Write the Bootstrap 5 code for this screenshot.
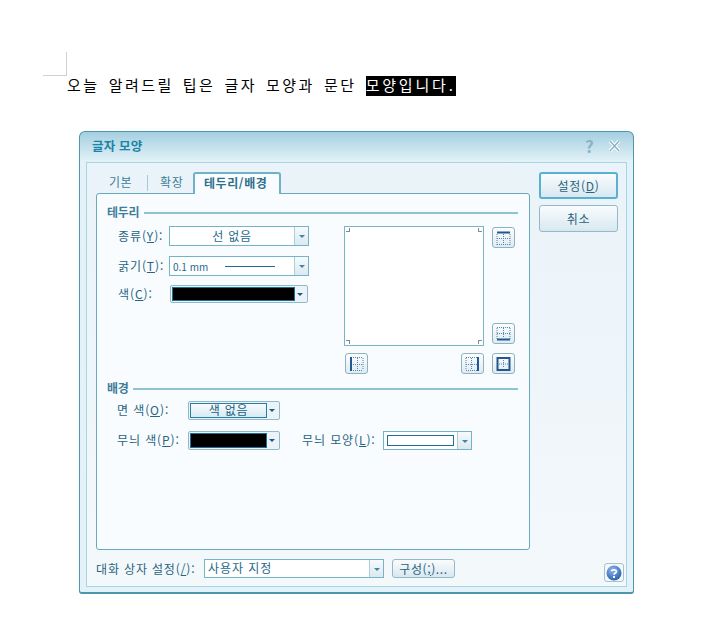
<!DOCTYPE html>
<html lang="ko"><head><meta charset="utf-8"><title>글자 모양</title>
<link rel="stylesheet" href="https://cdn.jsdelivr.net/npm/bootstrap@5.3.0/dist/css/bootstrap.min.css">
<style>
html,body{background:#fff;margin:0;font-family:"Noto Sans CJK KR","Noto Sans",sans-serif;font-size:12px;line-height:1.2;color:#2a6480}
.crop{width:24px;height:24px;margin:52px 0 0 43px;border-right:1px solid #d0d0d0;border-bottom:1px solid #d0d0d0}
.docline{margin:0 0 0 67px;height:20px;line-height:18px;font-size:15px;color:#000;letter-spacing:2.45px;white-space:nowrap;word-spacing:2.5px}
.docline span{background:#000;color:#fff;display:inline-block;height:20px;letter-spacing:2.8px}
.dlg{width:555px;height:463px;margin:35px 0 0 79px;border:1px solid #4c96ae;border-radius:6px 6px 3px 3px;background:linear-gradient(#a4cfe0 0,#e3f2f8 30px);background-color:#e3f2f8;border-bottom-width:2px}
.ttl{height:30px;padding:0 12px 3px 12px;color:#1b83a6;font-weight:700;font-size:12.5px;letter-spacing:.2px}
.hbtn{color:#8ab2c4;font-size:17px;font-weight:700;line-height:1}
.hgap{gap:14px}
.inner{height:425px;margin:0 6px;border:1px solid #a8d5df;background:linear-gradient(#eaf3f9,#f3f8fb);padding:9px 2px 0 9px}
.lcol{width:434px}
.dtabs{height:21px;border:0;padding-left:5px;flex-wrap:nowrap}
.dtabs .nav-link{border:0;padding:3px 8px 0;height:21px;color:#3d7d98;font-size:12px;background:none;border-radius:0;margin:0;letter-spacing:.5px}
.dtabs .tabsep{width:1px;height:16px;margin:3px 4px 0 7px;background:#a8c9d6}
.dtabs .nav-link.active{border:2px solid #6fb1c6;border-bottom:0;border-radius:3px 3px 0 0;background:#f8fcfe;color:#2f6f8c;font-weight:700;width:88px;height:22px;position:relative;z-index:2;margin-left:2px;padding:2px 3px 0 0;text-align:center;letter-spacing:.6px}
.pane{height:357px;border:1px solid #68a9bd;border-radius:3px;background:#f8fcfe;padding:11px 11px 0 10px}
.hd{height:14px;line-height:14px;font-weight:700;color:#3d7d98;font-size:12px;letter-spacing:-.3px}
.hd.second{margin-top:7px}
.hd i{flex:1;height:2px;background:#8fc2d3;margin-left:5px;margin-top:1px}
.fields{width:237px;padding-top:7px}
.frow{height:20px;margin-bottom:10px}
.frow.last{height:18px;margin-top:-1px}
.lbl{padding-left:11px;flex:none;white-space:nowrap;letter-spacing:.9px}
.combo{border:1px solid #74b3c8;background:#fff;height:20px;flex:none}
.combo b{flex:1;font-weight:400;text-align:center;line-height:17px;white-space:nowrap;font-size:12px;color:#236a8a;letter-spacing:.7px}
.combo b.thin{font-size:10px;letter-spacing:0;padding-left:3px}
.arr{width:14px;flex:none;border-left:1px solid #a9cfdc;background:linear-gradient(#f6fafc,#dbe9f0);position:relative}
.arr:after{content:"";position:absolute;left:4px;top:8px;border:3px solid transparent;border-top:3px solid #3e86a8;border-bottom:0}
.swatch{border:1px solid #95b8c7;border-radius:2px;padding:1px;background:#eaf3f7;height:18px;flex:none}
.swatch.tall{height:19px}
.swatch em{display:block;background:#000;border:1px solid #1e6f95;flex:1;font-style:normal;text-align:center}
.swatch .arr{border:0;background:none;width:11px}
.swatch .arr:after{left:2px;top:6px;border-top-color:#24587a}
.linew{width:50px;height:1px;background:#1f6d97;margin-left:17px}
.grid2{display:grid;grid-template-columns:140px 23px;grid-template-rows:120px 21px;column-gap:8px;row-gap:7px;margin-top:7px}
.prev{border:1px solid #7ab4c9;background:#fff;position:relative}
.cn{position:absolute;width:4px;height:4px;border:1px solid #888}
.tl{left:1px;top:1px;border-width:0 1px 1px 0}.tr{right:1px;top:1px;border-width:0 0 1px 1px}
.bl{left:1px;bottom:1px;border-width:1px 1px 0 0}.br{right:1px;bottom:1px;border-width:1px 0 0 1px}
.bbtn{width:23px;height:21px;padding:0;border:1px solid #8fb2c0;border-radius:3px;background:linear-gradient(#fbfdfe,#dfebf2);display:flex;align-items:center;justify-content:center}
.bbtn svg{display:block}
.sidebtns{height:117px;margin-top:1px}
.botbtns{padding-left:1px}
.rcol{width:79px;margin-left:9px}
.dbtn{width:79px;height:27px;padding:0;font-size:12px;color:#2a6480;border:1px solid #96b8c6;border-radius:3px;background:linear-gradient(#f9fcfd,#d8e8f0);display:block;line-height:1;letter-spacing:.7px}
.dbtn.def{height:27px;border:2px solid #59b1d2;margin-bottom:6px}
.foot{height:24px;margin-top:9px}
.foot .lbl{padding-left:0;width:108px;letter-spacing:.85px;line-height:19px}
.foot b{text-align:left;padding-left:3px;line-height:16px;letter-spacing:.95px}
.cfg{width:63px;height:19px;padding:0;margin-left:8px;font-size:12px;line-height:1;color:#2a6480;border:1px solid #96b8c6;border-radius:3px;background:linear-gradient(#f9fcfd,#d8e8f0);letter-spacing:.6px}
.qbtn{width:20px;height:19px;margin:4px 0 0 auto;border:1px solid #a5c2cf;border-radius:3px;background:#f3f8fb;padding:0;display:flex;align-items:center;justify-content:center}
.nocol{border:1px solid #2a7ca1;background:linear-gradient(#f7fbfd,#d6eaf3);flex:1;text-align:center;line-height:11px;color:#1d5f7e;font-size:12px;letter-spacing:.7px}
.bgrows{padding-top:6px}
.brow{height:19px}
.brow.first{margin-bottom:11px}
.blbl{width:81px;padding-left:10px}
.blbl2{width:103px;padding-left:22px}
.inbox{padding:3px}
.inbox span{border:1px solid #1e6f95}
</style></head><body>
<div class="crop"></div>
<p class="docline">오늘 알려드릴 팁은 글자 모양과 문단 <span>모양입니다.</span></p>
<div class="dlg">
  <div class="ttl d-flex align-items-center justify-content-between">
    <div>글자 모양</div>
    <div class="d-flex align-items-center hgap">
      <span class="hbtn">?</span>
      <svg width="13" height="12" viewBox="0 0 13 12"><path d="M2 1l9 10M11 1L2 11" stroke="#fff" stroke-width="3.4"/><path d="M2 1l9 10M11 1L2 11" stroke="#8ab2c4" stroke-width="1.4" fill="none"/></svg>
    </div>
  </div>
  <div class="inner">
    <div class="d-flex">
      <div class="lcol">
        <ul class="nav nav-tabs dtabs">
          <li class="nav-item"><a class="nav-link" href="#">기본</a></li>
          <li class="nav-item tabsep"></li>
          <li class="nav-item"><a class="nav-link" href="#">확장</a></li>
          <li class="nav-item"><a class="nav-link active" href="#">테두리/배경</a></li>
        </ul>
        <div class="pane">
          <div class="hd d-flex align-items-center">테두리<i></i></div>
          <div class="d-flex">
            <div class="fields">
              <div class="frow d-flex align-items-center"><span class="lbl" style="width:62px">종류(<u>Y</u>):</span><div class="combo d-flex" style="width:140px"><b>선 없음</b><span class="arr"></span></div></div>
              <div class="frow d-flex align-items-center"><span class="lbl" style="width:62px">굵기(<u>T</u>):</span><div class="combo d-flex" style="width:140px"><b class="thin d-flex align-items-center">0.1 mm<span class="linew"></span></b><span class="arr"></span></div></div>
              <div class="frow last d-flex align-items-center"><span class="lbl" style="width:63px">색(<u>C</u>):</span><div class="swatch d-flex" style="width:138px"><em></em><span class="arr"></span></div></div>
            </div>
            <div class="grid2">
              <div class="prev"><i class="cn tl"></i><i class="cn tr"></i><i class="cn bl"></i><i class="cn br"></i></div>
              <div class="sidebtns d-flex flex-column justify-content-between">
                <button class="bbtn" type="button" aria-label="위"><svg width="15" height="14" viewBox="0 0 15 14"><path d="M1 7.500h13M7.500 3v10M1 13.500h13M1 3v11M14 3v11" stroke="#5a86ad" stroke-dasharray="1 1" fill="none"/><path d="M1 1.500h13" stroke="#24578f" stroke-width="2"/></svg></button>
                <button class="bbtn" type="button" aria-label="아래"><svg width="15" height="14" viewBox="0 0 15 14"><path d="M1 6.500h13M7.500 1v10M1 .5h13M1 1v11M14 1v11" stroke="#5a86ad" stroke-dasharray="1 1" fill="none"/><path d="M1 12.500h13" stroke="#24578f" stroke-width="2"/></svg></button>
              </div>
              <div class="botbtns d-flex justify-content-between">
                <button class="bbtn" type="button" aria-label="왼쪽"><svg width="15" height="14" viewBox="0 0 15 14"><path d="M2 7.500h12M8.500 1v12M2 .5h12M2 13.500h12M14 1v12" stroke="#5a86ad" stroke-dasharray="1 1" fill="none"/><path d="M2 0v14" stroke="#24578f" stroke-width="2"/></svg></button>
                <button class="bbtn" type="button" aria-label="오른쪽"><svg width="15" height="14" viewBox="0 0 15 14"><path d="M1 7.500h12M6.500 1v12M1 .5h12M1 13.500h12M1 1v12" stroke="#5a86ad" stroke-dasharray="1 1" fill="none"/><path d="M13 0v14" stroke="#24578f" stroke-width="2"/></svg></button>
              </div>
              <button class="bbtn" type="button" aria-label="모두"><svg width="15" height="14" viewBox="0 0 15 14"><path d="M3 7h9M7.500 3v8" stroke="#5a86ad" stroke-dasharray="1 1" fill="none"/><rect x="1.500" y="1" width="12" height="12" fill="none" stroke="#24578f" stroke-width="2"/></svg></button>
            </div>
          </div>
          <div class="hd second d-flex align-items-center">배경<i></i></div>
          <div class="bgrows">
            <div class="brow first d-flex align-items-center"><span class="lbl blbl">면 색(<u>O</u>):</span><div class="swatch tall d-flex" style="width:92px"><div class="nocol">색 없음</div><span class="arr"></span></div></div>
            <div class="brow d-flex align-items-center"><span class="lbl blbl">무늬 색(<u>P</u>):</span><div class="swatch tall d-flex" style="width:92px"><em></em><span class="arr"></span></div><span class="lbl blbl2">무늬 모양(<u>L</u>):</span><div class="combo d-flex" style="width:89px;height:19px"><span class="inbox flex-fill d-flex"><span class="flex-fill"></span></span><span class="arr"></span></div></div>
          </div>
        </div>
      </div>
      <div class="rcol">
        <button class="btn dbtn def" type="button">설정(<u>D</u>)</button>
        <button class="btn dbtn" type="button">취소</button>
      </div>
    </div>
    <div class="foot d-flex align-items-start">
      <span class="lbl">대화 상자 설정(<u>/</u>):</span>
      <div class="combo d-flex" style="width:180px;height:19px"><b>사용자 지정</b><span class="arr"></span></div>
      <button class="btn cfg" type="button">구성(<u>;</u>)...</button>
      <button class="btn qbtn" type="button" aria-label="도움말"><svg width="16" height="16" viewBox="0 0 16 16"><defs><radialGradient id="q" cx=".4" cy=".3" r=".8"><stop offset="0" stop-color="#8fb6ea"/><stop offset="1" stop-color="#1f57ad"/></radialGradient></defs><circle cx="8" cy="8" r="7.500" fill="url(#q)"/><path d="M5.500 6.200C5.500 4.500 10.500 4.200 10.500 6.500 10.500 8 8 8 8 9.800" fill="none" stroke="#fff" stroke-width="1.700"/><rect x="7" y="11" width="2" height="2" fill="#fff"/></svg></button>
    </div>
  </div>
</div>
<script src="https://cdn.jsdelivr.net/npm/bootstrap@5.3.0/dist/js/bootstrap.bundle.min.js"></script>
</body></html>
